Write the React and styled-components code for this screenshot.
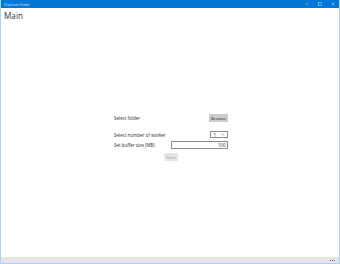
import styled, { createGlobalStyle } from "styled-components";

const Global = createGlobalStyle`
  html, body { margin: 0; padding: 0; }
  body {
    width: 340px;
    height: 264px;
    overflow: hidden;
    font-family: "Open Sans", "Liberation Sans", sans-serif;
    background: #fff;
  }
`;

const Window = styled.div`
  display: flex;
  flex-direction: column;
  width: 340px;
  height: 264px;
  box-sizing: border-box;
  border-left: 1px solid #a9d2f2;
  border-right: 1px solid #a9d2f2;
  border-bottom: 1px solid #a9d2f2;
`;

const TitleBar = styled.div`
  display: flex;
  align-items: center;
  height: 8px;
  background: #0078d7;
  color: #dbeaf7;
  padding-left: 3px;
  font-size: 3.4px;
`;

const Title = styled.span`
  flex: 1;
`;

const Control = styled.span`
  display: flex;
  align-items: center;
  justify-content: center;
  width: 13px;
  height: 8px;
  opacity: 0.85;
`;

const Page = styled.div`
  flex: 1;
  display: flex;
  flex-direction: column;
`;

const Heading = styled.h1`
  margin: 0;
  padding: 3px 0 0 3px;
  font-size: 8.2px;
  font-weight: 400;
  color: #3a3a3a;
  line-height: 10px;
`;

const Form = styled.div`
  flex: 1;
  display: flex;
  flex-direction: column;
  align-items: stretch;
  width: 114px;
  margin: 93px 0 0 113px;
  font-size: 4.5px;
  color: #2a2a2a;
`;

const Row = styled.div`
  display: flex;
  align-items: center;
  justify-content: space-between;
  height: ${(p) => p.$h || 8}px;
  margin-bottom: ${(p) => p.$gap || 0}px;
`;

const Button = styled.div`
  display: flex;
  align-items: center;
  justify-content: center;
  width: ${(p) => p.$w}px;
  height: 8px;
  background: ${(p) => (p.$disabled ? "#e6e6e6" : "#cccccc")};
  color: ${(p) => (p.$disabled ? "#a0a0a0" : "#222")};
  font-size: 4.3px;
`;

const Combo = styled.div`
  display: flex;
  align-items: center;
  justify-content: space-between;
  box-sizing: border-box;
  width: 18px;
  height: 7px;
  border: 0.5px solid #8a8a8a;
  padding: 0 2px 0 2.5px;
`;

const TextBox = styled.div`
  display: flex;
  align-items: center;
  justify-content: flex-end;
  box-sizing: border-box;
  width: 57px;
  height: 7.5px;
  border: 0.5px solid #8a8a8a;
  padding-right: 1.5px;
`;

const StartWrap = styled.div`
  display: flex;
  justify-content: center;
  margin-top: 4.5px;
`;

const AppBar = styled.div`
  display: flex;
  align-items: center;
  justify-content: flex-end;
  height: 6px;
  background: #e6e6e6;
  padding-right: 4px;
`;

const Dots = styled.span`
  display: flex;
  gap: 1px;
  span {
    width: 1px;
    height: 1px;
    background: #666;
  }
`;

export default function App() {
  return (
    <>
      <Global />
      <Window>
        <TitleBar>
          <Title>Duplicate Finder</Title>
          <Control>
            <svg width="4" height="4" viewBox="0 0 4 4"><path d="M0.4 2h3.2" stroke="#fff" strokeWidth="0.45" /></svg>
          </Control>
          <Control>
            <svg width="4" height="4" viewBox="0 0 4 4"><rect x="0.5" y="0.5" width="3" height="3" fill="none" stroke="#fff" strokeWidth="0.45" /></svg>
          </Control>
          <Control>
            <svg width="4" height="4" viewBox="0 0 4 4"><path d="M0.5 0.5L3.5 3.5M3.5 0.5L0.5 3.5" stroke="#fff" strokeWidth="0.45" /></svg>
          </Control>
        </TitleBar>
        <Page>
          <Heading>Main</Heading>
          <Form>
            <Row $gap={9}>
              <span>Select folder</span>
              <Button $w={19}>Browse</Button>
            </Row>
            <Row $h={7} $gap={3}>
              <span>Select number of worker</span>
              <Combo>
                <span>1</span>
                <svg width="4" height="3" viewBox="0 0 4 3"><path d="M0.4 0.9L2 2.2L3.6 0.9" fill="none" stroke="#444" strokeWidth="0.4" /></svg>
              </Combo>
            </Row>
            <Row $h={7.5}>
              <span>Set buffer size (MB)</span>
              <TextBox>100</TextBox>
            </Row>
            <StartWrap>
              <Button $w={14} $disabled>Start</Button>
            </StartWrap>
          </Form>
        </Page>
        <AppBar>
          <Dots><span /><span /><span /></Dots>
        </AppBar>
      </Window>
    </>
  );
}
